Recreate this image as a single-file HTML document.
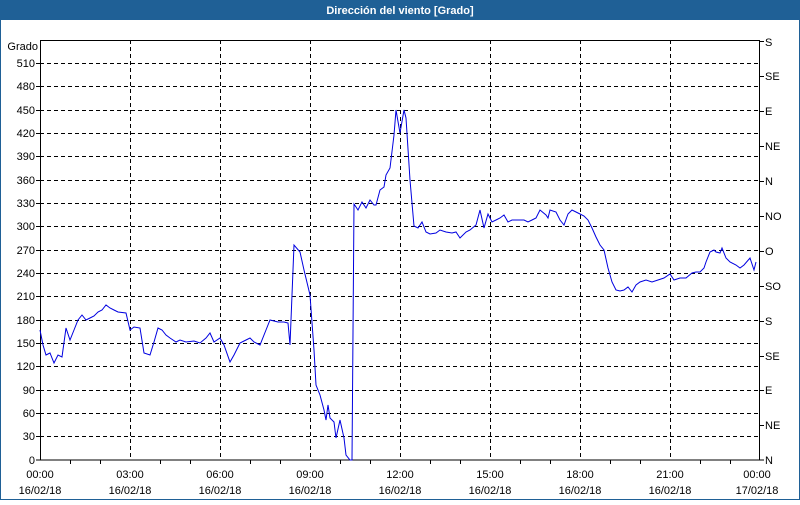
<!DOCTYPE html>
<html><head><meta charset="utf-8"><style>
body{margin:0;width:800px;height:500px;overflow:hidden;background:#fff;font-family:"Liberation Sans",sans-serif}
</style></head><body>
<svg width="800" height="500" xmlns="http://www.w3.org/2000/svg" font-family="Liberation Sans, sans-serif" font-size="11">
<rect x="0" y="0" width="800" height="500" fill="#fff"/>
<rect x="0.5" y="0.5" width="799" height="499" fill="none" stroke="#1f6096" stroke-width="1"/>
<rect x="0" y="0" width="800" height="20" fill="#1f6096"/>
<text x="400" y="14" fill="#fff" font-weight="bold" font-size="11" text-anchor="middle">Dirección del viento [Grado]</text>
<g stroke="#000" stroke-dasharray="4,3" stroke-width="1">
<line x1="40" y1="63.5" x2="760" y2="63.5"/><line x1="40" y1="86.5" x2="760" y2="86.5"/><line x1="40" y1="110.5" x2="760" y2="110.5"/><line x1="40" y1="133.5" x2="760" y2="133.5"/><line x1="40" y1="156.5" x2="760" y2="156.5"/><line x1="40" y1="180.5" x2="760" y2="180.5"/><line x1="40" y1="203.5" x2="760" y2="203.5"/><line x1="40" y1="226.5" x2="760" y2="226.5"/><line x1="40" y1="250.5" x2="760" y2="250.5"/><line x1="40" y1="273.5" x2="760" y2="273.5"/><line x1="40" y1="296.5" x2="760" y2="296.5"/><line x1="40" y1="320.5" x2="760" y2="320.5"/><line x1="40" y1="343.5" x2="760" y2="343.5"/><line x1="40" y1="366.5" x2="760" y2="366.5"/><line x1="40" y1="390.5" x2="760" y2="390.5"/><line x1="40" y1="413.5" x2="760" y2="413.5"/><line x1="40" y1="436.5" x2="760" y2="436.5"/>
<line x1="130.5" y1="40" x2="130.5" y2="460"/><line x1="220.5" y1="40" x2="220.5" y2="460"/><line x1="310.5" y1="40" x2="310.5" y2="460"/><line x1="400.5" y1="40" x2="400.5" y2="460"/><line x1="490.5" y1="40" x2="490.5" y2="460"/><line x1="580.5" y1="40" x2="580.5" y2="460"/><line x1="670.5" y1="40" x2="670.5" y2="460"/>
</g>
<rect x="40.5" y="40.5" width="719" height="419.5" fill="none" stroke="#000"/>
<g stroke="#000">
<path d="M70.5 460v4M100.5 460v4M160.5 460v4M190.5 460v4M250.5 460v4M280.5 460v4M340.5 460v4M370.5 460v4M430.5 460v4M460.5 460v4M520.5 460v4M550.5 460v4M610.5 460v4M640.5 460v4M700.5 460v4M730.5 460v4"/>
<path d="M760 41.5h4M760 76.5h4M760 111.5h4M760 146.5h4M760 181.5h4M760 216.5h4M760 251.5h4M760 286.5h4M760 321.5h4M760 356.5h4M760 390.5h4M760 425.5h4M760 460h4"/>
<path d="M36 63.5h4M36 86.5h4M36 110.5h4M36 133.5h4M36 156.5h4M36 180.5h4M36 203.5h4M36 226.5h4M36 250.5h4M36 273.5h4M36 296.5h4M36 320.5h4M36 343.5h4M36 366.5h4M36 390.5h4M36 413.5h4M36 436.5h4M36 460h4"/>
</g>
<g text-anchor="end" fill="#000">
<text x="38" y="50">Grado</text>
<text x="35" y="67">510</text><text x="35" y="90">480</text><text x="35" y="114">450</text><text x="35" y="137">420</text><text x="35" y="160">390</text><text x="35" y="184">360</text><text x="35" y="207">330</text><text x="35" y="230">300</text><text x="35" y="254">270</text><text x="35" y="277">240</text><text x="35" y="300">210</text><text x="35" y="324">180</text><text x="35" y="347">150</text><text x="35" y="370">120</text><text x="35" y="394">90</text><text x="35" y="417">60</text><text x="35" y="440">30</text><text x="35" y="464">0</text>
</g>
<g fill="#000">
<text x="765" y="46">S</text><text x="765" y="80">SE</text><text x="765" y="115">E</text><text x="765" y="150">NE</text><text x="765" y="185">N</text><text x="765" y="220">NO</text><text x="765" y="255">O</text><text x="765" y="290">SO</text><text x="765" y="325">S</text><text x="765" y="360">SE</text><text x="765" y="394">E</text><text x="765" y="429">NE</text><text x="765" y="464">N</text>
</g>
<g text-anchor="middle" fill="#000">
<text x="40" y="478">00:00</text><text x="40" y="494">16/02/18</text>
<text x="130" y="478">03:00</text><text x="130" y="494">16/02/18</text>
<text x="220" y="478">06:00</text><text x="220" y="494">16/02/18</text>
<text x="310" y="478">09:00</text><text x="310" y="494">16/02/18</text>
<text x="400" y="478">12:00</text><text x="400" y="494">16/02/18</text>
<text x="490" y="478">15:00</text><text x="490" y="494">16/02/18</text>
<text x="580" y="478">18:00</text><text x="580" y="494">16/02/18</text>
<text x="670" y="478">21:00</text><text x="670" y="494">16/02/18</text>
<text x="757" y="478">00:00</text><text x="757" y="494">17/02/18</text>
</g>
<polyline fill="none" stroke="#0000e0" stroke-width="1" points="40,330 43,345 46,355 50,353 54,363 58,355 62,357 66,328 70,340 74,330 78,320 82,315 86,320 90,318 94,316 98,312 102,310 106,305 110,308 114,310 118,312 126,313 130,330 134,327 140,328 144,353 150,355 154,342 158,328 162,330 166,335 170,338 176,342 180,340 186,342 194,341 200,343 206,338 210,333 214,342 220,338 224,345 230,362 234,355 240,343 246,340 250,338 254,342 260,345 266,330 270,320 278,322 284,322 288,323 290,345 294,245 300,252 304,270 310,295 314,350 316,385 320,395 324,410 326,420 328,405 330,418 334,422 336,438 340,420 344,438 346,455 350,460 352,460 354,204 358,210 362,202 366,208 370,200 374,205 376,205 380,190 384,187 386,175 390,168 394,135 396,110 400,133 404,110 406,118 410,180 414,226 418,228 422,222 426,232 430,234 436,233 440,230 446,232 452,233 456,232 460,238 466,232 470,230 476,225 480,210 484,228 488,214 492,222 496,220 500,218 504,215 508,222 512,220 516,220 520,220 524,220 528,222 532,220 536,218 540,210 546,215 548,218 550,210 556,212 560,220 564,225 568,214 572,210 576,212 580,214 584,216 588,220 592,228 596,237 600,245 604,250 608,268 612,282 616,290 620,291 624,290 628,287 632,292 636,285 640,282 646,280 652,282 658,280 664,278 670,274 674,280 680,278 686,278 692,273 696,272 700,272 704,268 706,262 710,252 714,250 716,252 720,253 722,248 726,258 730,262 736,265 740,268 744,265 750,258 754,270 756,262"/>
</svg>
</body></html>
